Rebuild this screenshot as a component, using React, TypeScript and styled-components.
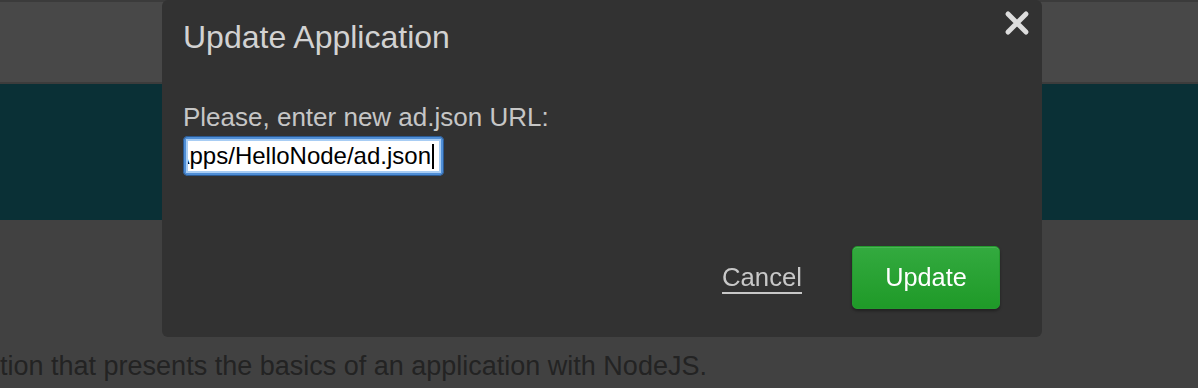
import React from "react";
import styled, { createGlobalStyle } from "styled-components";

const GlobalStyle = createGlobalStyle`
  html, body {
    margin: 0;
    padding: 0;
    background: #414141;
    font-family: "Liberation Sans", Arial, Helvetica, sans-serif;
    overflow: hidden;
  }
`;

const Page = styled.div`
  width: 1198px;
  height: 388px;
  display: flex;
  flex-direction: column;
  background: #414141;
`;

const TopBar = styled.header`
  height: 80px;
  background: #484848;
  border-top: 2px solid #3b3b3b;
  border-bottom: 2px solid #3c3c3c;
`;

const Hero = styled.section`
  height: 136px;
  background: #0a3036;
`;

const Content = styled.main`
  padding: 131px 0 0 0;
`;

const Intro = styled.p`
  margin: 0;
  font-size: 27px;
  line-height: 31px;
  color: #232323;
  white-space: nowrap;
`;

const Overlay = styled.div`
  position: fixed;
  inset: 0;
  display: flex;
  justify-content: center;
  align-items: flex-start;
`;

const Modal = styled.div`
  position: relative;
  margin-left: 6px;
  width: 880px;
  height: 337px;
  background: #323232;
  border-radius: 6px;
  display: flex;
  flex-direction: column;
  box-sizing: border-box;
`;

const Header = styled.div`
  padding: 21px 21px 0;
`;

const Title = styled.h2`
  margin: 0;
  font-size: 32px;
  line-height: 32px;
  font-weight: 400;
  color: #d2d2d2;
`;

const CloseButton = styled.button`
  position: absolute;
  top: 9px;
  right: 11px;
  width: 28px;
  height: 28px;
  padding: 0;
  border: 0;
  background: transparent;
  display: flex;
  align-items: center;
  justify-content: center;
  cursor: pointer;
`;

const Body = styled.div`
  padding: 49px 21px 0;
  display: flex;
  flex-direction: column;
  gap: 4px;
`;

const Label = styled.label`
  font-size: 26px;
  line-height: 30px;
  color: #c6c6c6;
`;

const FocusRing = styled.div`
  width: 261px;
  height: 40px;
  box-sizing: border-box;
  padding: 3px;
  border-radius: 5px;
  background: #4f8ed6;
  box-shadow: 0 0 0 1px #2b5a93 inset;
`;

const Field = styled.div`
  height: 100%;
  box-sizing: border-box;
  background: #fff;
  border: 2px solid #a8cdf4;
  display: flex;
  justify-content: flex-end;
  align-items: center;
  overflow: hidden;
  padding-right: 5px;
`;

const FieldText = styled.span`
  font-size: 24px;
  line-height: 28px;
  color: #000;
  white-space: nowrap;
`;

const Caret = styled.span`
  width: 2px;
  height: 25px;
  background: #000;
  flex: none;
  margin-left: 1px;
`;

const Footer = styled.div`
  margin-top: auto;
  padding: 0 42px 28px;
  display: flex;
  justify-content: flex-end;
  align-items: center;
  gap: 50px;
`;

const LinkButton = styled.button`
  border: 0;
  padding: 0;
  background: transparent;
  font-family: inherit;
  font-size: 25.7px;
  color: #c8c8c8;
  text-decoration: underline;
  text-decoration-thickness: 2px;
  text-underline-offset: 6px;
  cursor: pointer;
`;

const PrimaryButton = styled.button`
  width: 148px;
  height: 63px;
  border-radius: 5px;
  border: 1px solid #249a2e;
  background: linear-gradient(#33aa3f, #1f9a28);
  box-shadow: 0 2px 3px rgba(0, 0, 0, 0.35), inset 0 1px 0 rgba(255, 255, 255, 0.12);
  color: #fff;
  font-family: inherit;
  font-size: 25.3px;
  cursor: pointer;
`;

export default function App() {
  return (
    <>
      <GlobalStyle />
      <Page>
        <TopBar />
        <Hero />
        <Content>
          <Intro>tion that presents the basics of an application with NodeJS.</Intro>
        </Content>
      </Page>
      <Overlay>
        <Modal>
          <Header>
            <Title>Update Application</Title>
          </Header>
          <CloseButton aria-label="Close">
            <svg width="28" height="28" viewBox="0 0 28 28">
              <path
                d="M5 5 L23 23 M23 5 L5 23"
                stroke="#dddddd"
                strokeWidth="5"
                strokeLinecap="round"
                fill="none"
              />
            </svg>
          </CloseButton>
          <Body>
            <Label>Please, enter new ad.json URL:</Label>
            <FocusRing>
              <Field>
                <FieldText>http://localhost/Apps/HelloNode/ad.json</FieldText>
                <Caret />
              </Field>
            </FocusRing>
          </Body>
          <Footer>
            <LinkButton>Cancel</LinkButton>
            <PrimaryButton>Update</PrimaryButton>
          </Footer>
        </Modal>
      </Overlay>
    </>
  );
}
